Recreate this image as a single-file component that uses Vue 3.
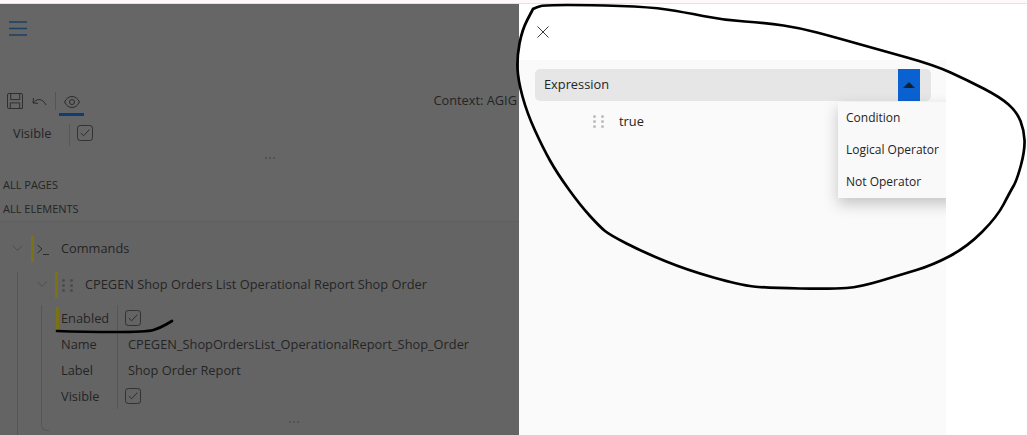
<template>
  <div class="page">
    <div class="topline"></div>
    <div class="body">
      <div class="left">
        <div class="nav">
          <svg class="burger" width="18" height="15" viewBox="0 0 18 15"><path d="M0 1h18M0 7.500h18M0 14h18" /></svg>
        </div>
        <div class="toolbar">
          <svg class="ic save" width="16" height="16" viewBox="0 0 17 17"><path d="M2 .5h13a1.500 1.500 0 0 1 1.500 1.500v14.500H2A1.500 1.500 0 0 1 .5 15V2A1.500 1.500 0 0 1 2 .5zM4 .5v6.500h9.500V.5M3.500 16.500v-6h10v6" /></svg>
          <svg class="ic undo" width="15" height="9" viewBox="0 0 15 9"><path d="M1.500 1L1 6l5 .3M1 6C4 2 10 .2 14 8" /></svg>
          <span class="tdiv"></span>
          <div class="tab">
            <svg class="ic" width="16" height="12" viewBox="0 0 16 12"><path d="M.5 6C2.500 2.300 5 .5 8 .5s5.500 1.800 7.500 5.500c-2 3.700-4.500 5.500-7.500 5.500S2.500 9.700.5 6z" /><circle cx="8" cy="6" r="2.500" /></svg>
          </div>
          <span class="context">Context: AGIG</span>
        </div>
        <div class="visible">
          <span class="vlabel">Visible</span>
          <span class="vdiv"></span>
          <svg class="check" width="16" height="16" viewBox="0 0 17 17"><rect x=".5" y=".5" width="16" height="16" rx="3" /><path d="M4 8.500l3 3 6-6.500" /></svg>
        </div>
        <div class="more first"><i></i><i></i><i></i></div>
        <div class="crumbs">
          <div class="crumb">ALL PAGES</div>
          <div class="crumb">ALL ELEMENTS</div>
        </div>
        <div class="tree">
          <div class="row cmd">
            <svg class="chev" width="11" height="6" viewBox="0 0 11 6"><path d="M.5.500l5 5 5-5" /></svg>
            <span class="bar"></span>
            <svg class="ic term" width="12" height="11" viewBox="0 0 12 11"><path d="M.5 1l4.500 4L.5 9M6 10.500h6" /></svg>
            <span class="title">Commands</span>
          </div>
          <div class="children">
            <div class="row sub">
              <svg class="chev" width="10" height="6" viewBox="0 0 11 6"><path d="M.5.500l5 5 5-5" /></svg>
              <span class="bar"></span>
              <span class="grip dark"><i v-for="n in 6" :key="n"></i></span>
              <span class="title">CPEGEN Shop Orders List Operational Report Shop Order</span>
            </div>
            <div class="props">
              <div v-for="p in props" :key="p.name" class="prop" :class="{ on: p.mark }">
                <span class="pname">{{ p.name }}</span>
                <svg v-if="p.check" class="check" width="16" height="16" viewBox="0 0 17 17"><rect x=".5" y=".5" width="16" height="16" rx="3" /><path d="M4 8.500l3 3 6-6.500" /></svg>
                <span v-else class="pval">{{ p.value }}</span>
              </div>
            </div>
            <div class="more second"><i></i><i></i><i></i></div>
          </div>
        </div>
      </div>
      <div class="drawer">
        <div class="dhead">
          <svg class="close" width="12" height="12" viewBox="0 0 12 12"><path d="M.5.500l11 11M11.500.500l-11 11" /></svg>
        </div>
        <div class="dbody">
          <div class="select">
            <span class="sval">Expression</span>
            <button class="btn"><span class="tri"></span></button>
          </div>
          <div class="expr">
            <span class="grip"><i v-for="n in 6" :key="n"></i></span>
            <span>true</span>
          </div>
          <div class="menu">
            <div v-for="m in menu" :key="m" class="item">{{ m }}</div>
          </div>
        </div>
      </div>
      <div class="gutter"></div>
    </div>
    <svg class="ink" width="1027" height="435" viewBox="0 0 1027 435">
      <path :d="loop" />
      <path :d="under" />
    </svg>
  </div>
</template>

<script setup>
const props = [
  { name: 'Enabled', check: true, mark: true },
  { name: 'Name', value: 'CPEGEN_ShopOrdersList_OperationalReport_Shop_Order' },
  { name: 'Label', value: 'Shop Order Report' },
  { name: 'Visible', check: true },
]
const menu = ['Condition', 'Logical Operator', 'Not Operator']

// hand drawn marks, smoothed through the midpoints
const smooth = (pts) => {
  let d = `M${pts[0][0]} ${pts[0][1]}`
  for (let i = 1; i < pts.length - 1; i++) {
    const mx = (pts[i][0] + pts[i + 1][0]) / 2, my = (pts[i][1] + pts[i + 1][1]) / 2
    d += `Q${pts[i][0]} ${pts[i][1]} ${mx} ${my}`
  }
  const l = pts[pts.length - 1]
  return d + `L${l[0]} ${l[1]}`
}
const loop = smooth([
  [533, 9], [537, 7], [545, 5], [590, 5], [650, 7], [683, 12], [723, 20], [767, 23], [800, 28], [834, 37], [880, 50],
  [934, 65], [967, 80], [1000, 97], [1017, 112], [1024, 130], [1025, 150], [1017, 180], [1010, 192], [997, 217], [967, 247],
  [933, 265], [900, 275], [860, 287], [833, 289], [767, 288], [740, 285], [687, 270], [643, 252],
  [610, 235], [600, 227], [580, 205], [557, 173], [543, 148], [527, 113], [518, 80], [517, 57], [522, 30], [533, 9],
])
const under = smooth([[57, 331], [83, 332], [147, 332], [160, 328], [172, 321]])
</script>

<style>
html, body { margin: 0; background: #fff; }
</style>

<style scoped>
.page { position: relative; width: 1027px; height: 435px; overflow: hidden; display: flex; flex-direction: column; background: #fff; font-family: "Open Sans", "Liberation Sans", sans-serif; font-size: 12.8px; color: #242424; }
.topline { height: 3px; background: #fff8f9; border-bottom: 1px solid #f7d9df; flex: none; }
.body { flex: 1; display: flex; min-height: 0; }

.left { width: 519px; flex: none; background: #666; overflow: hidden; }
.nav { height: 47px; padding: 17px 0 0 9px; box-sizing: border-box; }
.burger path { fill: none; stroke: #1c4064; stroke-width: 1.500; }
.ic { fill: none; stroke: #2b2b2b; stroke-width: 1; flex: none; }
.toolbar { height: 26px; box-sizing: border-box; margin-top: 39px; display: flex; align-items: flex-start; padding: 3px 0 0 7px; }
.undo { margin: 4px 0 0 9px; }
.tdiv { width: 1px; height: 18px; background: #555; margin: -1px 3px 0 8px; }
.tab { width: 25px; height: 26px; margin-top: -3px; display: flex; align-items: center; justify-content: center; border-bottom: 3px solid #0e3d73; box-sizing: border-box; }
.context { margin-left: auto; margin-right: 2px; white-space: nowrap; line-height: 14px; }
.visible { height: 24px; margin-top: 5px; display: flex; align-items: center; padding-left: 13px; }
.vlabel { width: 56px; }
.vdiv { width: 1px; height: 22px; background: #565656; margin: 4px 7px 0 0; }
.check { flex: none; }
.check rect { fill: none; stroke: #2e2e2e; }
.check path { fill: none; stroke: #2a2a2a; }
.more { display: flex; gap: 2px; justify-content: center; height: 2px; }
.more i { width: 2px; height: 2px; border-radius: 50%; background: #4d4d4d; }
.more.first { margin-top: 12px; margin-left: 21px; }
.crumbs { margin-top: 14px; border-bottom: 1px solid #5f5f5f; }
.crumb { height: 24px; line-height: 24px; padding-left: 3px; font-size: 11px; }
.tree { padding: 14px 0 0 12px; background: #646464; height: 214px; box-sizing: border-box; }
.row { height: 26px; display: flex; align-items: center; }
.chev { fill: none; stroke: #4c4c4c; flex: none; margin-top: -3px; }
.bar { width: 3px; height: 26px; background: #7b7213; flex: none; }
.cmd .bar { margin-left: 8px; }
.term { margin-left: 3px; }
.cmd .title { margin: -2px 0 0 12px; }
.children { margin: 10px 0 0 5px; border-left: 1px solid #565656; height: 200px; }
.sub { margin-left: 19px; }
.sub .bar { margin-left: 8px; }
.grip { display: grid; grid-template-columns: 3px 3px; gap: 2px 5px; flex: none; }
.grip i { width: 3px; height: 3px; border-radius: 50%; background: #bdbdc1; }
.grip.dark i { background: #4c4c4c; }
.sub .grip { margin-left: 4px; }
.sub .title { margin: -2px 0 0 12px; white-space: nowrap; }
.props { position: relative; margin: 7px 0 0 23px; width: 8px; height: 126px; border-left: 1px solid #565656; border-bottom: 1px solid #565656; border-bottom-left-radius: 6px; box-sizing: border-box; }
.prop { width: max-content; height: 26px; display: flex; align-items: center; white-space: nowrap; position: relative; }
.pname { width: 56px; padding-left: 19px; height: 100%; line-height: 26px; border-right: 1px solid #565656; flex: none; }
.prop.on::before { content: ""; position: absolute; left: 14px; top: 2px; width: 3px; height: 22px; background: #7b7213; }
.prop .check { margin-left: 7px; }
.pval { margin-left: 10px; }
.more.second { margin: -10px 0 0 270px; width: 12px; }

.drawer { width: 427px; flex: none; position: relative; overflow: hidden; background: #fafafa; }
.dhead { height: 56px; background: #fff; padding: 22px 0 0 18px; box-sizing: border-box; }
.close { display: block; fill: none; stroke: #3a3a3a; }
.dbody { padding: 9px 15px 0 16px; }
.select { height: 32px; background: #e6e6e6; border-radius: 5px; display: flex; align-items: center; justify-content: space-between; padding: 0 11px 0 9px; }
.sval { margin-top: -2px; }
.btn { width: 22px; height: 32px; border: 0; padding: 0; background: #0a62d2; display: flex; align-items: center; justify-content: center; }
.tri { width: 0; height: 0; border: 6px solid transparent; border-top: 0; border-bottom: 6px solid #14202e; }
.expr { height: 26px; margin-top: 7px; display: flex; align-items: center; gap: 15px; padding-left: 58px; }
.menu { position: absolute; top: 98px; left: 319px; width: 120px; background: #f9f9f9; box-shadow: 0 6px 14px rgba(0, 0, 0, .22); }
.item { height: 32px; line-height: 32px; padding-left: 8px; white-space: nowrap; font-size: 12px; }
.gutter { flex: 1; background: #fff; }

.ink { position: absolute; inset: 0; pointer-events: none; }
.ink path { fill: none; stroke: #000; stroke-width: 2.700; stroke-linecap: round; stroke-linejoin: round; }
</style>
